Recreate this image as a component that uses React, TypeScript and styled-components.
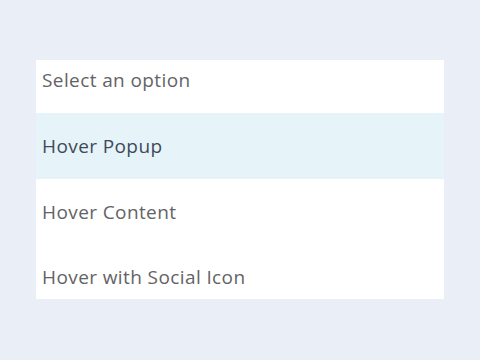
import React from 'react';
import styled, { createGlobalStyle } from 'styled-components';

const GlobalStyle = createGlobalStyle`
  html, body {
    margin: 0;
    padding: 0;
    background: #e9eef7;
  }
`;

const options = [
  { label: 'Select an option', kind: 'first' },
  { label: 'Hover Popup', kind: 'active' },
  { label: 'Hover Content', kind: 'normal' },
  { label: 'Hover with Social Icon', kind: 'last' },
];

export default function App() {
  return (
    <>
      <GlobalStyle />
      <Page>
        <List>
          {options.map((o) => (
            <Option key={o.label} $kind={o.kind}>
              {o.label}
            </Option>
          ))}
        </List>
      </Page>
    </>
  );
}

const Page = styled.div`
  width: 480px;
  height: 360px;
  padding: 60px 36px 0;
  box-sizing: border-box;
  background: #e9eef7;
`;

const List = styled.div`
  width: 408px;
  height: 239px;
  overflow: hidden;
  background: #ffffff;
  display: flex;
  flex-direction: column;
`;

const Option = styled.div<{ $kind: string }>`
  display: flex;
  align-items: center;
  box-sizing: border-box;
  padding-left: 6px;
  height: ${(p) => (p.$kind === 'first' ? '53px' : p.$kind === 'last' ? '54px' : '66px')};
  padding-bottom: ${(p) => (p.$kind === 'first' ? '13px' : '0')};
  padding-top: ${(p) => (p.$kind === 'last' ? '10px' : '0')};
  background: ${(p) => (p.$kind === 'active' ? '#e6f4f9' : '#ffffff')};
  color: ${(p) => (p.$kind === 'active' ? '#3e4a5a' : '#636366')};
  font-family: 'Open Sans', sans-serif;
  font-size: 19px;
  letter-spacing: 0.4px;
  flex-shrink: 0;
`;
